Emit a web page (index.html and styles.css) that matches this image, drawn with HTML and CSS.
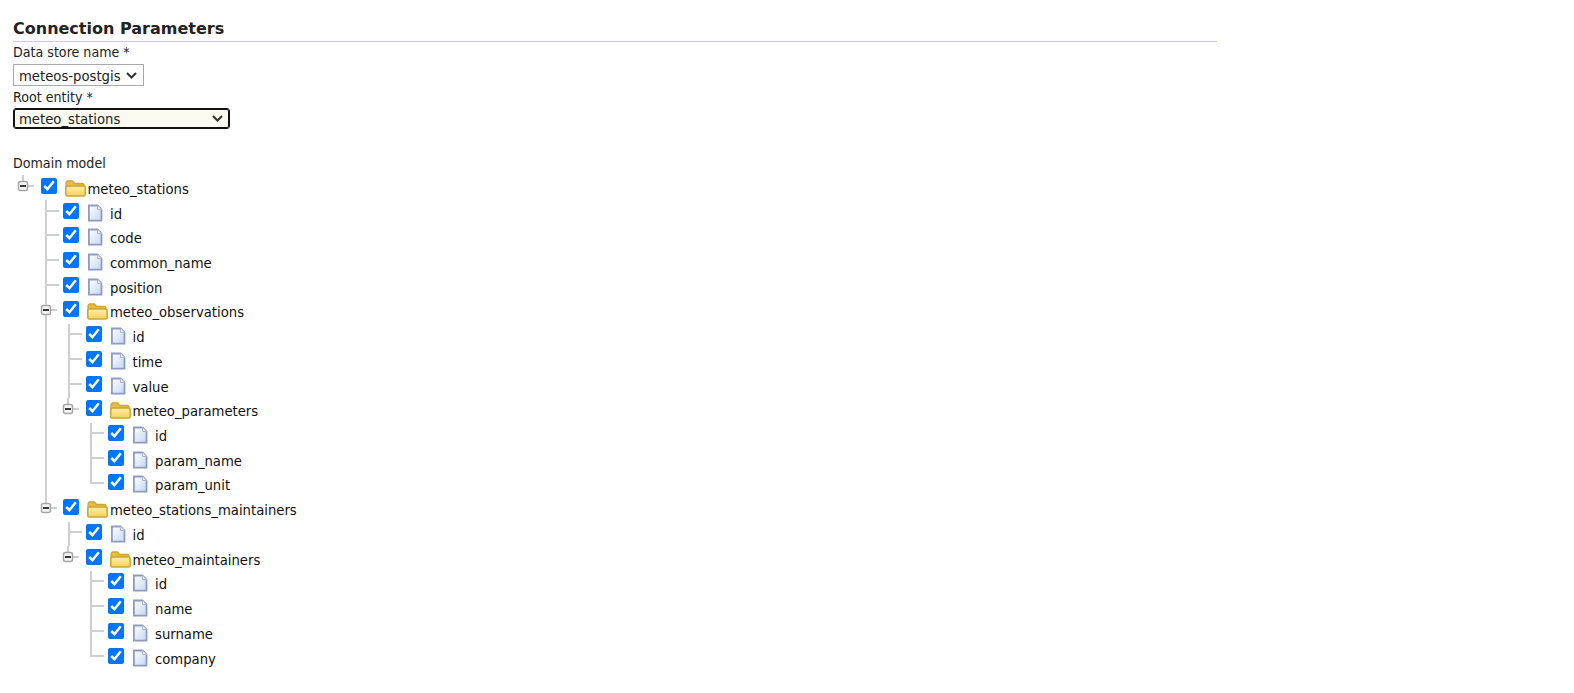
FILE: index.html
```html
<!DOCTYPE html>
<html lang="en">
<head>
<meta charset="utf-8">
<title>Connection Parameters</title>
<link rel="stylesheet" href="styles.css">
</head>
<body>
<svg class="defs" width="0" height="0" aria-hidden="true">
  <defs>
    <linearGradient id="fileFill" x1="0" y1="0" x2="1" y2="1"><stop offset="0" stop-color="#ffffff"/><stop offset="1" stop-color="#c2d7f4"/></linearGradient>
    <linearGradient id="folderFill" x1="0" y1="0" x2="0" y2="1"><stop offset="0" stop-color="#fff1a8"/><stop offset="1" stop-color="#f6d058"/></linearGradient>
    <symbol id="file" viewBox="0 0 16 18"><path d="M1.900 1.500h8.600l4 4V16.600H1.900z" fill="url(#fileFill)" stroke="#8e9bc2" stroke-width="1.800"/><path d="M10.500 1.500v4h4" fill="#f4f8fe" stroke="#a9b6d6"/></symbol>
    <symbol id="folder" viewBox="0 0 21 17"><path d="M1 13V3.500C1 2 1.800 1 3 1h4.500l2 2.500H17c1.200 0 2 .8 2 2V13z" fill="#e8bb42" stroke="#cda733" stroke-width="1.300"/><path d="M2.700 6h15.600c1.100 0 1.900.7 1.900 1.700v6.800c0 .9-.7 1.600-1.600 1.600H2.700c-1.100 0-1.900-.7-1.900-1.700V7.700C.8 6.700 1.600 6 2.700 6z" fill="url(#folderFill)" stroke="#cda733" stroke-width="1.500"/></symbol>
    <symbol id="exp" viewBox="0 0 24 25"><path d="M6 0v6M11 11h6" stroke="#cfcfcf" stroke-width="2" fill="none"/><rect x="1.500" y="6.500" width="9" height="9" rx="2" fill="#f6f6f6" stroke="#a6a6a6" stroke-width="1.500"/><path d="M3 11h6" stroke="#222" stroke-width="1.800"/></symbol>
  </defs>
</svg>
<main class="page">
  <h2 class="title">Connection Parameters</h2>
  <div class="field">
    <label class="label" for="store">Data store name *</label>
    <select class="select" id="store"><option>meteos-postgis</option></select>
  </div>
  <div class="field field-next">
    <label class="label" for="root">Root entity *</label>
    <select class="select select-focus" id="root"><option>meteo_stations</option></select>
  </div>
  <div class="domain">
    <div class="label">Domain model</div>
    <ul class="tree root">
      <li class="node last">
        <div class="row"><svg class="exp"><use href="#exp"/></svg><input type="checkbox" checked><svg class="ico-folder"><use href="#folder"/></svg><span class="name-f">meteo_stations</span></div>
        <ul class="tree">
          <li class="node"><div class="row"><span class="conn"></span><input type="checkbox" checked><svg class="ico-file"><use href="#file"/></svg><span class="name">id</span></div></li>
          <li class="node"><div class="row"><span class="conn"></span><input type="checkbox" checked><svg class="ico-file"><use href="#file"/></svg><span class="name">code</span></div></li>
          <li class="node"><div class="row"><span class="conn"></span><input type="checkbox" checked><svg class="ico-file"><use href="#file"/></svg><span class="name">common_name</span></div></li>
          <li class="node"><div class="row"><span class="conn"></span><input type="checkbox" checked><svg class="ico-file"><use href="#file"/></svg><span class="name">position</span></div></li>
          <li class="node">
            <div class="row"><svg class="exp"><use href="#exp"/></svg><input type="checkbox" checked><svg class="ico-folder"><use href="#folder"/></svg><span class="name-f">meteo_observations</span></div>
            <ul class="tree">
              <li class="node"><div class="row"><span class="conn"></span><input type="checkbox" checked><svg class="ico-file"><use href="#file"/></svg><span class="name">id</span></div></li>
              <li class="node"><div class="row"><span class="conn"></span><input type="checkbox" checked><svg class="ico-file"><use href="#file"/></svg><span class="name">time</span></div></li>
              <li class="node"><div class="row"><span class="conn"></span><input type="checkbox" checked><svg class="ico-file"><use href="#file"/></svg><span class="name">value</span></div></li>
              <li class="node last">
                <div class="row"><svg class="exp"><use href="#exp"/></svg><input type="checkbox" checked><svg class="ico-folder"><use href="#folder"/></svg><span class="name-f">meteo_parameters</span></div>
                <ul class="tree">
                  <li class="node"><div class="row"><span class="conn"></span><input type="checkbox" checked><svg class="ico-file"><use href="#file"/></svg><span class="name">id</span></div></li>
                  <li class="node"><div class="row"><span class="conn"></span><input type="checkbox" checked><svg class="ico-file"><use href="#file"/></svg><span class="name">param_name</span></div></li>
                  <li class="node last"><div class="row"><span class="conn"></span><input type="checkbox" checked><svg class="ico-file"><use href="#file"/></svg><span class="name">param_unit</span></div></li>
                </ul>
              </li>
            </ul>
          </li>
          <li class="node last">
            <div class="row"><svg class="exp"><use href="#exp"/></svg><input type="checkbox" checked><svg class="ico-folder"><use href="#folder"/></svg><span class="name-f">meteo_stations_maintainers</span></div>
            <ul class="tree">
              <li class="node"><div class="row"><span class="conn"></span><input type="checkbox" checked><svg class="ico-file"><use href="#file"/></svg><span class="name">id</span></div></li>
              <li class="node last">
                <div class="row"><svg class="exp"><use href="#exp"/></svg><input type="checkbox" checked><svg class="ico-folder"><use href="#folder"/></svg><span class="name-f">meteo_maintainers</span></div>
                <ul class="tree">
                  <li class="node"><div class="row"><span class="conn"></span><input type="checkbox" checked><svg class="ico-file"><use href="#file"/></svg><span class="name">id</span></div></li>
                  <li class="node"><div class="row"><span class="conn"></span><input type="checkbox" checked><svg class="ico-file"><use href="#file"/></svg><span class="name">name</span></div></li>
                  <li class="node"><div class="row"><span class="conn"></span><input type="checkbox" checked><svg class="ico-file"><use href="#file"/></svg><span class="name">surname</span></div></li>
                  <li class="node last"><div class="row"><span class="conn"></span><input type="checkbox" checked><svg class="ico-file"><use href="#file"/></svg><span class="name">company</span></div></li>
                </ul>
              </li>
            </ul>
          </li>
        </ul>
      </li>
    </ul>
  </div>
</main>
</body>
</html>
```
FILE: styles.css
```css
* { box-sizing: border-box; }
html, body { margin: 0; background: #fff; }
body { font-family: "DejaVu Sans Condensed", "DejaVu Sans", Verdana, sans-serif; font-size: 14px; color: #222; }
.defs { display: block; width: 0; height: 0; }
.page { width: 1204px; margin: 0 0 0 13px; padding-top: 19px; }
.title { margin: 0; height: 23px; padding-bottom: 2px; border-bottom: 1px solid #ccd8a8; font-family: "DejaVu Sans", Verdana, sans-serif; font-size: 16px; line-height: 20px; font-weight: 700; color: #222; }
.field { display: flex; flex-direction: column; align-items: flex-start; }
.field-next { margin-top: 1px; }
.label { display: block; height: 22px; line-height: 21px; font-size: 14.100px; color: #222; }
.field-next .label { height: 21px; }
.select {
  appearance: none;
  width: 131px;
  height: 22px;
  padding: 0 0 0 5px;
  font-family: "DejaVu Sans Condensed", "DejaVu Sans", Verdana, sans-serif;
  font-size: 14.700px;
  color: #222;
  background: #fff url("data:image/svg+xml,%3Csvg xmlns='http://www.w3.org/2000/svg' width='11' height='7'%3E%3Cpath d='M1 1l4.500 4.500L10 1' fill='none' stroke='%23333' stroke-width='2'/%3E%3C/svg%3E") no-repeat right 6px center;
  border: 1px solid #aaa;
  border-radius: 0;
}
.select-focus { width: 217px; height: 21px; background-color: #fafaf0; border-color: #111; outline: 1px solid #111; outline-offset: -2px; border-radius: 3px; }
.domain { margin-top: 24px; }
.domain > .label { height: 22.500px; }
.tree { list-style: none; margin: 0; padding: 0; }
.root { padding-left: 9.500px; }
.tree .tree { margin-left: 20.500px; }
.node { border-left: 2px solid #cfcfcf; }
.node.last { border-left-color: transparent; }
.row { display: flex; align-items: center; height: 24.720px; }
.conn { display: block; flex: none; width: 12px; height: 2px; margin: 0 4px 4px 0; background: #cfcfcf; }
.last > .row > .conn { align-self: flex-start; width: 14px; height: 12px; margin: 0 4px 0 -2px; background: none; border-left: 2px solid #cfcfcf; border-bottom: 2px solid #cfcfcf; }
.exp { flex: none; width: 24px; height: 25px; margin-left: -7.500px; margin-right: -0.500px; }
input[type="checkbox"] { flex: none; width: 16px; height: 16px; margin: 0 8px 4px 0; }
.ico-file { flex: none; width: 16px; height: 18px; margin-right: 7px; }
.ico-folder { flex: none; width: 21px; height: 17px; margin: 1px 2px 0 0; }
.name, .name-f { margin-top: 2px; font-size: 14.700px; line-height: 20px; color: #111; white-space: nowrap; }
```
